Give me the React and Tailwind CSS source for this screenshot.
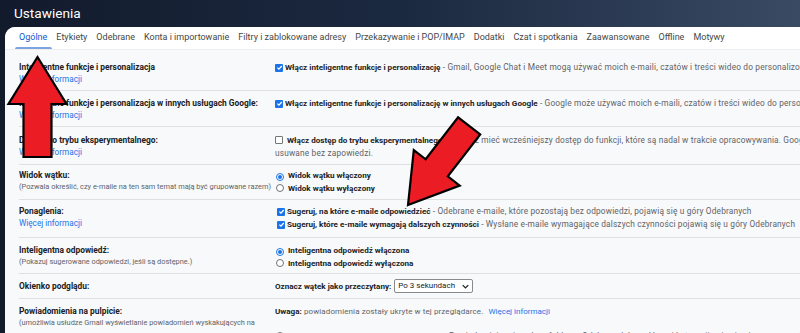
import React from 'react';

const tabs = [
  'Ogólne',
  'Etykiety',
  'Odebrane',
  'Konta i importowanie',
  'Filtry i zablokowane adresy',
  'Przekazywanie i POP/IMAP',
  'Dodatki',
  'Czat i spotkania',
  'Zaawansowane',
  'Offline',
  'Motywy',
];

function More() {
  return <div className="text-[8.2px] text-[#1a73e8]">Więcej informacji</div>;
}

function Check({ on }) {
  if (!on) {
    return <span className="inline-block w-[8px] h-[8px] mr-[4px] border border-[#757575] rounded-[1px] bg-white align-[-1px]" />;
  }
  return (
    <span className="inline-flex items-center justify-center w-[8px] h-[8px] mr-[2px] rounded-[1px] bg-[#1a73e8] align-[-1px]">
      <svg width="7" height="7" viewBox="0 0 10 10">
        <path d="M2 5.2 L4.2 7.3 L8.2 2.8" fill="none" stroke="white" strokeWidth="1.8" />
      </svg>
    </span>
  );
}

function Radio({ on }) {
  return (
    <span
      className={
        'inline-flex items-center justify-center w-[8px] h-[8px] mr-[4px] rounded-full border align-[-1px] bg-white ' +
        (on ? 'border-[#1a73e8]' : 'border-[#757575]')
      }
    >
      {on && <span className="w-[4px] h-[4px] rounded-full bg-[#1a73e8]" />}
    </span>
  );
}

function Row({ h, pt, left, children, last }) {
  return (
    <div className={`flex ${h} ${pt} ${last ? '' : 'border-b border-[#e0e0e0]'}`}>
      <div className="w-[256px] shrink-0 leading-[12px]">{left}</div>
      <div className="flex-1 min-w-0 overflow-hidden whitespace-nowrap leading-[12px] text-[8px] text-[#5f6368]">
        {children}
      </div>
    </div>
  );
}

const B = ({ children }) => <b className="font-bold text-[8.1px] text-[#202124]">{children}</b>;
const N = ({ children }) => <span className="text-[8.3px] tracking-[0.17px] text-[#5f6368]">{children}</span>;
const Label = ({ children }) => <div className="font-bold text-[8.4px] text-[#202124] whitespace-nowrap">{children}</div>;
const Desc = ({ children }) => <div className="text-[7.4px] text-[#5f6368] whitespace-nowrap">{children}</div>;

function Arrow({ x, y, angle }) {
  return (
    <g transform={`translate(${x} ${y}) rotate(${angle})`}>
      <polygon
        points="0,0 -47,-29 -47,-14 -100,-14 -100,14 -47,14 -47,29"
        fill="#ec1c24"
        stroke="#000"
        strokeWidth="2.2"
        strokeLinejoin="miter"
      />
    </g>
  );
}

export default function App() {
  return (
    <div className="relative w-[800px] h-[333px] overflow-hidden bg-gradient-to-r from-[#121b2c] via-[#1b2940] to-[#3a4a63] font-['Roboto',sans-serif]">
      <div className="h-[27px] pl-[14px] flex items-center text-white text-[13.6px]">Ustawienia</div>

      <div className="ml-[5px] h-[306px] bg-[#f8f9fa] rounded-tl-[10px]">
        <div className="h-[23px] flex items-stretch pl-[9.5px] bg-white rounded-tl-[10px] border-b border-[#eceef0]">
          {tabs.map((t, i) => (
            <div
              key={t}
              className={
                'relative flex items-center px-[4.5px] text-[9px] whitespace-nowrap ' +
                (i === 0 ? 'text-[#0b57d0]' : 'text-[#444746]')
              }
            >
              {t}
              {i === 0 && <span className="absolute left-0 right-0 bottom-0 h-[2px] bg-[#7da3e0] rounded-t" />}
            </div>
          ))}
        </div>

        <div className="pt-[4px] pl-[14px]">
          <Row h="h-[37px]" pt="pt-[7px]" left={<><Label>Inteligentne funkcje i personalizacja</Label><More /></>}>
            <Check on />
            <B>Włącz inteligentne funkcje i personalizację</B>
            <N> - Gmail, Google Chat i Meet mogą używać moich e-maili, czatów i treści wideo do personalizowania moich doświadczeń</N>
          </Row>

          <Row h="h-[36px]" pt="pt-[6px]" left={<><Label>Inteligentne funkcje i personalizacja w innych usługach Google:</Label><More /></>}>
            <Check on />
            <B>Włącz inteligentne funkcje i personalizację w innych usługach Google</B>
            <N> - Google może używać moich e-maili, czatów i treści wideo do personalizowania</N>
          </Row>

          <Row h="h-[38px]" pt="pt-[7px]" left={<><Label>Dostęp do trybu eksperymentalnego:</Label><More /></>}>
            <div className="leading-[13px]">
              <Check />
              <B>Włącz dostęp do trybu eksperymentalnego</B>
              <N> - Możesz mieć wcześniejszy dostęp do funkcji, które są nadal w trakcie opracowywania. Google może je zmieniać lub</N>
            </div>
            <div className="leading-[13px]"><N>usuwane bez zapowiedzi.</N></div>
          </Row>

          <Row
            h="h-[35px]"
            pt="pt-[4px]"
            left={<><Label>Widok wątku:</Label><Desc>(Pozwala określić, czy e-maile na ten sam temat mają być grupowane razem)</Desc></>}
          >
            <div className="pl-[1px]"><Radio on /><B>Widok wątku włączony</B></div>
            <div className="pl-[1px]"><Radio /><B>Widok wątku wyłączony</B></div>
          </Row>

          <Row h="h-[38px]" pt="pt-[5px]" left={<><Label>Ponaglenia:</Label><More /></>}>
            <div className="leading-[13px] pl-[2px]">
              <Check on />
              <B>Sugeruj, na które e-maile odpowiedzieć</B>
              <N> - Odebrane e-maile, które pozostają bez odpowiedzi, pojawią się u góry Odebranych</N>
            </div>
            <div className="leading-[13px] pl-[2px]">
              <Check on />
              <B>Sugeruj, które e-maile wymagają dalszych czynności</B>
              <N> - Wysłane e-maile wymagające dalszych czynności pojawią się u góry Odebranych</N>
            </div>
          </Row>

          <Row
            h="h-[36px]"
            pt="pt-[6px]"
            left={<><Label>Inteligentna odpowiedź:</Label><Desc>(Pokazuj sugerowane odpowiedzi, jeśli są dostępne.)</Desc></>}
          >
            <div className="pl-[1px]"><Radio on /><B>Inteligentna odpowiedź włączona</B></div>
            <div className="pl-[1px]"><Radio /><B>Inteligentna odpowiedź wyłączona</B></div>
          </Row>

          <Row h="h-[25px]" pt="pt-[5px]" left={<div className="pt-[1px]"><Label>Okienko podglądu:</Label></div>}>
            <div className="flex items-center">
              <B>Oznacz wątek jako przeczytany:</B>
              <span className="ml-[3px] flex items-center justify-between w-[79px] h-[14px] px-[3px] border border-[#8a8a8a] rounded-[2px] bg-white text-[8px] text-[#202124]">
                Po 3 sekundach
                <svg width="7" height="5" viewBox="0 0 10 6">
                  <path d="M1 1 L5 5 L9 1" fill="none" stroke="#202124" strokeWidth="1.8" />
                </svg>
              </span>
            </div>
          </Row>

          <Row
            h="h-[40px]"
            pt="pt-[6px]"
            last
            left={<><Label>Powiadomienia na pulpicie:</Label><Desc>(umożliwia usłudze Gmail wyświetlanie powiadomień wyskakujących na</Desc></>}
          >
            <div>
              <B>Uwaga:</B>
              <span className="text-[8px] tracking-[0.1px]"> powiadomienia zostały ukryte w tej przeglądarce.</span>
              <span className="ml-[5px] text-[#1a73e8]">Więcej informacji</span>
            </div>
            <div className="mt-[12px] pl-[1px]">
              <Radio /><B>Włącz powiadomienia o nowych e-mailach</B>
              <N> - Powiadamiaj mnie, gdy w folderze Odebrane lub w głównej kategorii pojawią się nowe e-maile</N>
            </div>
          </Row>
        </div>
      </div>

      <svg className="absolute left-0 top-0 pointer-events-none" width="800" height="333">
        <Arrow x={37.5} y={57} angle={-90} />
        <Arrow x={408} y={205} angle={127.7} />
      </svg>
    </div>
  );
}
